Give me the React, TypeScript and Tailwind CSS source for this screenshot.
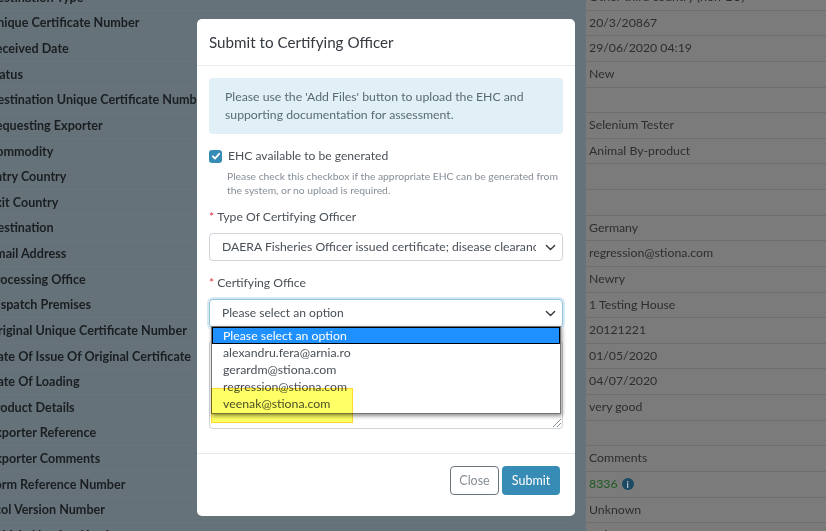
const rows: [string, string][] = [
  ['Destination Type', 'Other third country (non-EU)'],
  ['Unique Certificate Number', '20/3/20867'],
  ['Received Date', '29/06/2020 04:19'],
  ['Status', 'New'],
  ['Destination Unique Certificate Number', ''],
  ['Requesting Exporter', 'Selenium Tester'],
  ['Commodity', 'Animal By-product'],
  ['Entry Country', ''],
  ['Exit Country', ''],
  ['Destination', 'Germany'],
  ['Email Address', 'regression@stiona.com'],
  ['Processing Office', 'Newry'],
  ['Dispatch Premises', '1 Testing House'],
  ['Original Unique Certificate Number', '20121221'],
  ['Date Of Issue Of Original Certificate', '01/05/2020'],
  ['Date Of Loading', '04/07/2020'],
  ['Product Details', 'very good'],
  ['Exporter Reference', ''],
  ['Exporter Comments', 'Comments'],
  ['Form Reference Number', '8336'],
  ['Ecol Version Number', 'Unknown'],
  ['Vehicle Number Used', 'Unknown'],
];

const options = ['alexandru.fera@arnia.ro', 'gerardm@stiona.com', 'regression@stiona.com', 'veenak@stiona.com'];

function Chevron() {
  return (
    <svg className="h-[11px] w-[11px] shrink-0 text-[#343a40]" viewBox="0 0 16 16" fill="none" stroke="currentColor" strokeWidth="2" strokeLinecap="round" strokeLinejoin="round">
      <path d="M2 5l6 6 6-6" />
    </svg>
  );
}

function Label({ text }: { text: string }) {
  return (
    <div className="mb-[6px] h-[20px] text-[12.2px] leading-[20px] text-[#495057]">
      <span className="mr-[3px] text-[#dc3545]">*</span>
      {text}
    </div>
  );
}

export default function App() {
  return (
    <div className="relative h-[531px] w-[826px] overflow-hidden bg-[#66727a] font-['Lato','Roboto',sans-serif]">
      {/* page behind the backdrop */}
      <div className="-mt-[15px] flex flex-col">
        {rows.map(([label, value]) => (
          <div key={label} className="flex h-[25.63px]">
            <div className="-ml-[12px] flex w-[587px] shrink-0 items-center whitespace-nowrap border-b border-[#6a747b] pt-[2px] text-[12.6px] font-bold text-[#1a1e21]">{label}</div>
            <div className="ml-[11px] flex flex-1 items-center gap-[4px] border-b border-[#6e6e6e] bg-[#7b7b7b] pl-[3px] text-[12.3px] text-[#2e2e2e]">
              {value === '8336' ? (
                <>
                  <span className="text-[#1f5a1f]">8336</span>
                  <span className="flex h-[12px] w-[12px] items-center justify-center rounded-full bg-[#1c4a63] text-[9px] font-bold leading-none text-[#b8c4cc]">i</span>
                </>
              ) : (
                value
              )}
            </div>
          </div>
        ))}
      </div>

      {/* modal */}
      <div className="absolute left-[197px] top-[19px] flex h-[497px] w-[378px] flex-col rounded-[5px] bg-white text-[#495057]">
        <div className="flex h-[47px] items-center border-b border-[#e9ecef] px-[12px] text-[15.2px] text-[#343a40]">Submit to Certifying Officer</div>

        <div className="relative flex-1 px-[12px] pt-[12px]">
          <div className="h-[56px] rounded-[4px] bg-[#e1eff6] px-[16px] pt-[10px] text-[12.25px] leading-[18px] text-[#5b6b75]">
            Please use the 'Add Files' button to upload the EHC and supporting documentation for assessment.
          </div>

          <div className="mt-[12px] flex h-[20px] items-center gap-[6px] text-[12.1px]">
            <span className="flex h-[13px] w-[13px] items-center justify-center rounded-[3px] bg-[#368cb5]">
              <svg className="h-[10px] w-[10px]" viewBox="0 0 16 16" fill="none" stroke="white" strokeWidth="3" strokeLinecap="round" strokeLinejoin="round">
                <path d="M3 8.5l3.5 3.5L13 4.5" />
              </svg>
            </span>
            EHC available to be generated
          </div>
          <p className="mb-[10px] ml-[18px] mt-[3px] text-[10.3px] leading-[14px] text-[#868e96]">
            Please check this checkbox if the appropriate EHC can be generated from the system, or no upload is required.
          </p>

          <Label text="Type Of Certifying Officer" />
          <div className="mb-[12px] flex h-[28px] items-center rounded-[4px] border border-[#ced4da] pl-[12px] pr-[6px] text-[12.2px]">
            <span className="w-[314px] overflow-hidden whitespace-nowrap">DAERA Fisheries Officer issued certificate; disease clearance</span>
            <span className="ml-auto"><Chevron /></span>
          </div>

          <Label text="Certifying Office" />
          <div className="flex h-[29px] items-center justify-between rounded-[4px] border border-[#8fc3dc] pl-[12px] pr-[6px] text-[12.1px] shadow-[0_0_0_2px_rgba(54,140,181,0.2)]">
            Please select an option
            <Chevron />
          </div>

          {/* textarea under the open list */}
          <div className="relative mt-[12px] h-[89px] rounded-[4px] border border-[#ced4da]">
            <svg className="absolute bottom-[1px] right-[1px] h-[9px] w-[9px] text-[#8a8f94]" viewBox="0 0 9 9" stroke="currentColor" fill="none">
              <path d="M1 9l8-8M5 9l4-4" />
            </svg>
          </div>

          {/* open select list */}
          <div className="absolute left-[14px] top-[260px] w-[350px] border border-[#767676] bg-white text-[12.3px] leading-[17px] text-[#495057] shadow-[1px_2px_4px_rgba(0,0,0,0.45)]">
            <div className="border border-black bg-[#1e90ff] pl-[10px] leading-[15px] text-white">Please select an option</div>
            {options.map((o) => (
              <div key={o} className="pl-[11px]">{o}</div>
            ))}
            <div className="h-[1px]" />
          </div>

          {/* marker highlight added on the screenshot */}
          <div className="absolute left-[14px] top-[322px] h-[35px] w-[142px] border border-[#ffd92e] bg-[#ffff66] mix-blend-multiply" />
        </div>

        <div className="flex h-[63px] items-start justify-end gap-[3px] border-t border-[#e5e7e9] pr-[15px] pt-[12px] text-[12.5px]">
          <button className="h-[29px] w-[49px] rounded-[4px] border border-[#6c757d] pt-[1px] text-[#868e96]">Close</button>
          <button className="h-[29px] w-[58px] rounded-[4px] bg-[#368cb5] pt-[1px] text-white">Submit</button>
        </div>
      </div>
    </div>
  );
}
